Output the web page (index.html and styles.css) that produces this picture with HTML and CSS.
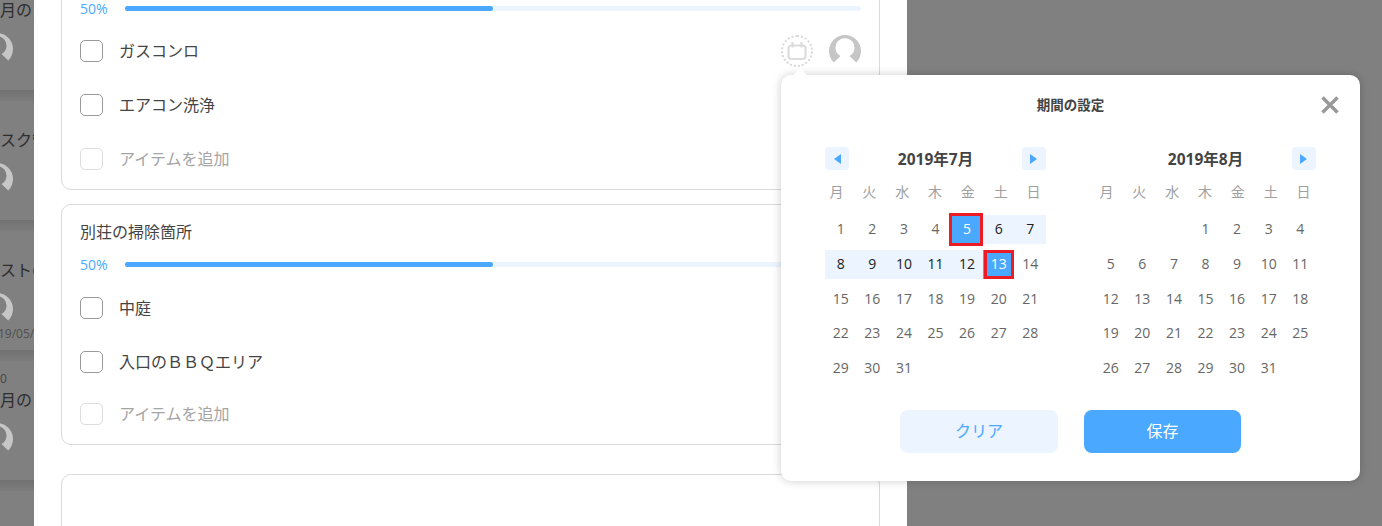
FILE: index.html
```html
<!DOCTYPE html>
<html lang="ja">
<head>
  <meta charset="UTF-8" />
  <meta name="viewport" content="width=device-width, initial-scale=1.0">
  <title>期間の設定</title>
  <link rel="stylesheet" href="styles.css">
</head>
<body>

  <!-- 左のカード一覧（暗転して端だけ見えている） -->
  <aside class="sideList">
    <div class="sideCard sideCardFirst">
      <div class="sideMeta"></div>
      <div class="sideTitle">月のカ</div>
      <svg class="avatar sideAvatar" viewBox="0 0 32 32"><path d="M4.8 27.5A16 16 0 1 1 27.2 27.5L20.5 21A9.5 9.5 0 1 0 11.5 21Z"/></svg>
    </div>
    <div class="sideCard">
      <div class="sideMeta"></div>
      <div class="sideTitle">スク管</div>
      <svg class="avatar sideAvatar" viewBox="0 0 32 32"><path d="M4.8 27.5A16 16 0 1 1 27.2 27.5L20.5 21A9.5 9.5 0 1 0 11.5 21Z"/></svg>
    </div>
    <div class="sideCard">
      <div class="sideMeta"></div>
      <div class="sideTitle">ストの</div>
      <svg class="avatar sideAvatar" viewBox="0 0 32 32"><path d="M4.8 27.5A16 16 0 1 1 27.2 27.5L20.5 21A9.5 9.5 0 1 0 11.5 21Z"/></svg>
      <div class="sideDate">19/05/</div>
    </div>
    <div class="sideCard">
      <div class="sideMeta">0</div>
      <div class="sideTitle">月のカ</div>
      <svg class="avatar sideAvatar" viewBox="0 0 32 32"><path d="M4.8 27.5A16 16 0 1 1 27.2 27.5L20.5 21A9.5 9.5 0 1 0 11.5 21Z"/></svg>
    </div>
  </aside>

  <main class="panel">
    <section class="checkCard checkCardFirst">
      <div class="cardTitle">キッチンの掃除箇所</div>
      <div class="progressRow">
        <span class="progressLabel">50%</span>
        <div class="progressTrack"><div class="progressFill" style="width: 50%"></div></div>
      </div>
      <div class="itemRow">
        <span class="checkBox"></span>
        <span class="itemText">ガスコンロ</span>
        <span class="itemTools">
          <span class="dateButton">
            <svg viewBox="0 0 22 22"><rect x="2.500" y="5.500" width="17" height="13.500" rx="3"/><path d="M6.500 2v5.500M15.500 2v5.500"/></svg>
          </span>
          <svg class="avatar" viewBox="0 0 32 32"><path d="M4.8 27.5A16 16 0 1 1 27.2 27.5L20.5 21A9.5 9.5 0 1 0 11.5 21Z"/></svg>
        </span>
      </div>
      <div class="itemRow">
        <span class="checkBox"></span>
        <span class="itemText">エアコン洗浄</span>
      </div>
      <div class="itemRow itemAdd">
        <span class="checkBox"></span>
        <span class="itemText">アイテムを追加</span>
      </div>
    </section>

    <section class="checkCard checkCardSecond">
      <div class="cardTitle">別荘の掃除箇所</div>
      <div class="progressRow">
        <span class="progressLabel">50%</span>
        <div class="progressTrack"><div class="progressFill" style="width: 50%"></div></div>
      </div>
      <div class="itemRow">
        <span class="checkBox"></span>
        <span class="itemText">中庭</span>
      </div>
      <div class="itemRow">
        <span class="checkBox"></span>
        <span class="itemText">入口のＢＢＱエリア</span>
      </div>
      <div class="itemRow itemAdd itemAddTight">
        <span class="checkBox"></span>
        <span class="itemText">アイテムを追加</span>
      </div>
    </section>

    <section class="checkCard checkCardEmpty"></section>
  </main>

  <!-- 期間の設定ポップアップ -->
  <div class="datePopup">
    <div class="popupHead">
      <span class="popupTitle">期間の設定</span>
      <svg class="popupClose" viewBox="0 0 18 18"><path d="M1.500 1.500l15 15M16.500 1.500l-15 15"/></svg>
    </div>

    <div class="months">
      <div class="month">
        <div class="monthHead">
          <span class="monthNav"><i class="arrowLeft"></i></span>
          <span class="monthName">2019年7月</span>
          <span class="monthNav"><i class="arrowRight"></i></span>
        </div>
        <div class="weekdays">
          <span>月</span><span>火</span><span>水</span><span>木</span><span>金</span><span>土</span><span>日</span>
        </div>
        <div class="days">
          <span>1</span><span>2</span><span>3</span><span>4</span><span class="rangeStart">5</span><span class="inRange">6</span><span class="inRange">7</span>
          <span class="inRange">8</span><span class="inRange">9</span><span class="inRange">10</span><span class="inRange">11</span><span class="inRange">12</span><span class="rangeEnd">13</span><span>14</span>
          <span>15</span><span>16</span><span>17</span><span>18</span><span>19</span><span>20</span><span>21</span>
          <span>22</span><span>23</span><span>24</span><span>25</span><span>26</span><span>27</span><span>28</span>
          <span>29</span><span>30</span><span>31</span>
        </div>
      </div>

      <div class="month">
        <div class="monthHead">
          <span class="monthNav navHidden"></span>
          <span class="monthName">2019年8月</span>
          <span class="monthNav"><i class="arrowRight"></i></span>
        </div>
        <div class="weekdays">
          <span>月</span><span>火</span><span>水</span><span>木</span><span>金</span><span>土</span><span>日</span>
        </div>
        <div class="days">
          <span></span><span></span><span></span><span>1</span><span>2</span><span>3</span><span>4</span>
          <span>5</span><span>6</span><span>7</span><span>8</span><span>9</span><span>10</span><span>11</span>
          <span>12</span><span>13</span><span>14</span><span>15</span><span>16</span><span>17</span><span>18</span>
          <span>19</span><span>20</span><span>21</span><span>22</span><span>23</span><span>24</span><span>25</span>
          <span>26</span><span>27</span><span>28</span><span>29</span><span>30</span><span>31</span>
        </div>
      </div>
    </div>

    <div class="popupButtons">
      <button class="btnClear">クリア</button>
      <button class="btnSave">保存</button>
    </div>
  </div>

</body>
</html>
```

FILE: styles.css
```css
* { margin: 0; padding: 0; box-sizing: border-box; }
html, body {
  height: 100vh;
  overflow: hidden;
}
body {
  display: flex;
  align-items: flex-start;
  background: #808080;
  color: #444;
  font-family: "Open Sans", "Noto Sans CJK JP", sans-serif;
}

/* left list */
.sideList {
  flex: none;
  width: 34px;
  height: 100vh;
  overflow: hidden;
  color: #2e2e2e;
}
.sideCard {
  height: 130px;
  padding-top: 10px;
  background: linear-gradient(#717171, #7d7d7d) bottom / 100% 11px no-repeat;
  white-space: nowrap;
}
.sideCardFirst { margin-top: -29px; }
.sideMeta {
  height: 16px;
  font-size: 12px;
  line-height: 16px;
  color: #444;
}
.sideTitle {
  height: 26px;
  font-size: 16px;
  line-height: 26px;
}
.sideAvatar {
  display: block;
  margin: 10px 0 0 -19px;
  fill: #5e5e5e;
}
.sideDate {
  height: 16px;
  margin: 1px 0 0 -2px;
  font-size: 12px;
  line-height: 16px;
  color: #4f4f4f;
}

/* main panel */
.panel {
  flex: none;
  width: 873px;
  height: 100vh;
  padding: 0 27px;
  overflow: hidden;
  background: #fff;
}
.checkCard {
  height: 241px;
  margin-bottom: 29px;
  padding: 0 18px 0 18px;
  border: 1px solid #d9d9d9;
  border-radius: 10px;
}
.checkCardFirst {
  height: 244px;
  margin-top: -54px;
  margin-bottom: 14px;
}
.checkCardFirst .progressRow { margin: 8px 0 6px; }
.checkCardSecond .progressRow { margin: 6px 0 7px; }
.checkCardEmpty { height: 200px; }
.cardTitle {
  height: 32px;
  margin-top: 11px;
  font-size: 16px;
  line-height: 32px;
}
.progressRow {
  display: flex;
  align-items: center;
  height: 20px;
}
.progressLabel {
  flex: none;
  width: 45px;
  font-size: 14px;
  color: #4aa8ff;
}
.progressTrack {
  flex: 1;
  height: 5px;
  border-radius: 3px;
  background: #ebf4ff;
}
.progressFill {
  height: 100%;
  border-radius: 3px;
  background: #4aa8ff;
}
.itemRow {
  display: flex;
  align-items: center;
  height: 54px;
}
.checkBox {
  flex: none;
  width: 23px;
  height: 22px;
  margin-right: 16px;
  border: 1px solid #999;
  border-radius: 5px;
}
.itemText { font-size: 16px; line-height: 1; }
.itemAdd .checkBox { border-color: #ddd; }
.itemAdd .itemText { color: #a5a5a5; }
.itemAddTight { margin-top: -2px; }
.itemTools {
  display: flex;
  align-items: center;
  gap: 16px;
  margin-left: auto;
}
.dateButton {
  display: flex;
  align-items: center;
  justify-content: center;
  width: 32px;
  height: 32px;
  border: 2px dotted #d8d8d8;
  border-radius: 50%;
}
.dateButton svg {
  width: 22px;
  height: 22px;
  fill: none;
  stroke: #dcdcdc;
  stroke-width: 2.2;
}
.avatar {
  flex: none;
  width: 32px;
  height: 32px;
  fill: #c6c6c6;
}

/* popup */
.datePopup {
  position: absolute;
  left: 781px;
  top: 75px;
  width: 579px;
  height: 406px;
  padding: 0 44px;
  border-radius: 10px;
  background: #fff;
  box-shadow: 0 0 10px rgba(0, 0, 0, 0.2);
}
.datePopup::before {
  content: "";
  position: absolute;
  left: 12px;
  top: -7px;
  border-left: 7px solid transparent;
  border-right: 7px solid transparent;
  border-bottom: 7px solid #fff;
}
.popupHead {
  display: flex;
  align-items: center;
  justify-content: center;
  height: 58px;
}
.popupTitle {
  font-size: 13.5px;
  font-weight: bold;
}
.popupClose {
  position: absolute;
  right: 21px;
  top: 21px;
  width: 18px;
  height: 18px;
  fill: none;
  stroke: #999;
  stroke-width: 3.5;
}
.months {
  display: flex;
  justify-content: space-between;
  margin-top: 14px;
}
.month { width: 221px; }
.monthHead {
  display: flex;
  align-items: center;
  justify-content: space-between;
  height: 23px;
}
.monthName {
  font-size: 15.5px;
  font-weight: bold;
}
.monthNav {
  display: flex;
  align-items: center;
  justify-content: center;
  width: 24px;
  height: 23px;
  border-radius: 4px;
  background: #ebf4ff;
}
.navHidden { visibility: hidden; }
.arrowLeft, .arrowRight {
  border-top: 5px solid transparent;
  border-bottom: 5px solid transparent;
}
.arrowLeft { border-right: 7px solid #4aa8ff; }
.arrowRight { border-left: 7px solid #4aa8ff; }
.weekdays {
  display: grid;
  grid-template-columns: repeat(7, 1fr);
  height: 22px;
  margin: 11px -4px 12px -5px;
  font-size: 14px;
  line-height: 22px;
  text-align: center;
  color: #a0a0a0;
}
.days {
  display: grid;
  grid-template-columns: repeat(7, 1fr);
  grid-auto-rows: 29px;
  row-gap: 5.8px;
  font-size: 14px;
  text-align: center;
  color: #666;
}
.days span {
  position: relative;
  line-height: 28px;
}
.inRange {
  background: #ebf4ff;
  color: #222;
}
.rangeStart, .rangeEnd {
  background: #4aa8ff;
  color: #fff;
}
/* red boxes around the picked days */
.rangeStart::after, .rangeEnd::after {
  content: "";
  position: absolute;
  border: 3px solid #ed1c24;
}
.rangeStart::after { left: -2px; right: 0; top: -2px; bottom: -2px; }
.rangeEnd::after { left: 1px; right: 0; top: 0; bottom: 0; }

.popupButtons {
  display: flex;
  justify-content: center;
  gap: 26px;
  margin-top: 27px;
}
.popupButtons button {
  height: 43px;
  padding-bottom: 3px;
  border: none;
  border-radius: 8px;
  font-family: inherit;
  font-size: 16px;
}
.btnClear {
  width: 158px;
  background: #ebf4ff;
  color: #4aa8ff;
}
.btnSave {
  width: 157px;
  background: #4aa8ff;
  color: #fff;
}
```
